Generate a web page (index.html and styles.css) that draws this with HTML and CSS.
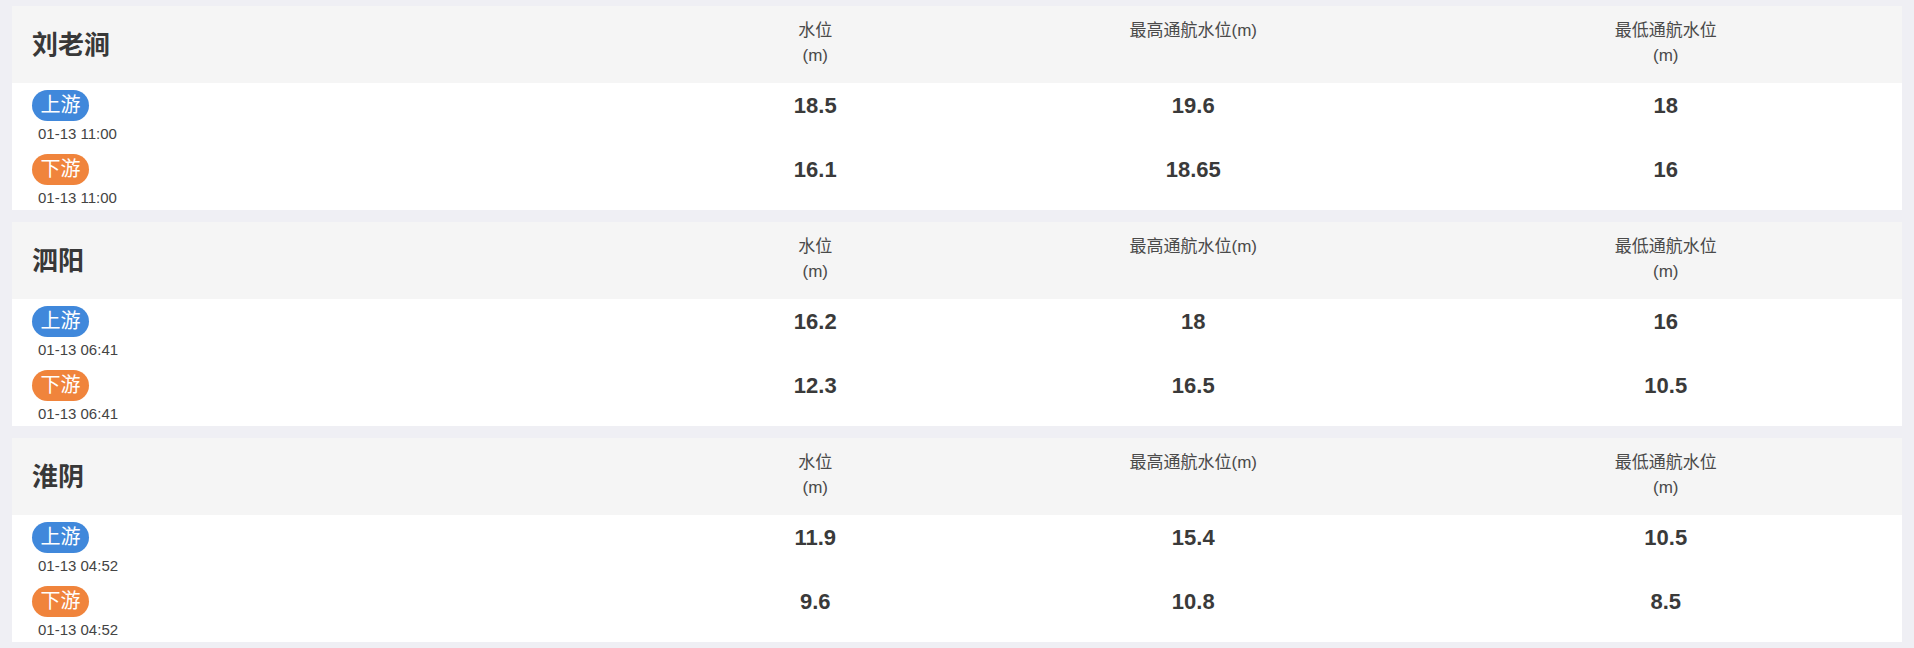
FILE: index.html
```html
<!DOCTYPE html>
<html lang="zh-CN">
<head>
<meta charset="utf-8">
<title>水位</title>
<link rel="stylesheet" href="styles.css">
</head>
<body>
<div class="list">
  <section class="card">
    <div class="grid head">
      <div class="title">刘老涧</div>
      <div class="th">水位<br>(m)</div>
      <div class="th">最高通航水位(m)</div>
      <div class="th">最低通航水位<br>(m)</div>
    </div>
    <div class="body">
      <div class="grid row">
        <div class="site"><span class="badge up">上游</span><div class="time">01-13 11:00</div></div>
        <div class="val">18.5</div>
        <div class="val">19.6</div>
        <div class="val">18</div>
      </div>
      <div class="grid row">
        <div class="site"><span class="badge down">下游</span><div class="time">01-13 11:00</div></div>
        <div class="val">16.1</div>
        <div class="val">18.65</div>
        <div class="val">16</div>
      </div>
    </div>
  </section>
  <section class="card">
    <div class="grid head">
      <div class="title">泗阳</div>
      <div class="th">水位<br>(m)</div>
      <div class="th">最高通航水位(m)</div>
      <div class="th">最低通航水位<br>(m)</div>
    </div>
    <div class="body">
      <div class="grid row">
        <div class="site"><span class="badge up">上游</span><div class="time">01-13 06:41</div></div>
        <div class="val">16.2</div>
        <div class="val">18</div>
        <div class="val">16</div>
      </div>
      <div class="grid row">
        <div class="site"><span class="badge down">下游</span><div class="time">01-13 06:41</div></div>
        <div class="val">12.3</div>
        <div class="val">16.5</div>
        <div class="val">10.5</div>
      </div>
    </div>
  </section>
  <section class="card">
    <div class="grid head">
      <div class="title">淮阴</div>
      <div class="th">水位<br>(m)</div>
      <div class="th">最高通航水位(m)</div>
      <div class="th">最低通航水位<br>(m)</div>
    </div>
    <div class="body">
      <div class="grid row">
        <div class="site"><span class="badge up">上游</span><div class="time">01-13 04:52</div></div>
        <div class="val">11.9</div>
        <div class="val">15.4</div>
        <div class="val">10.5</div>
      </div>
      <div class="grid row">
        <div class="site"><span class="badge down">下游</span><div class="time">01-13 04:52</div></div>
        <div class="val">9.6</div>
        <div class="val">10.8</div>
        <div class="val">8.5</div>
      </div>
    </div>
  </section>
</div>
</body>
</html>
```
FILE: styles.css
```css
html, body {
  margin: 0;
  padding: 0;
  background: #efeff4;
}
body {
  font-family: "Liberation Sans", "Noto Sans CJK SC", sans-serif;
  color: #333;
}
.list {
  padding: 6px 12px 0;
  display: flex;
  flex-direction: column;
  gap: 12px;
}
.card {
  background: #fff;
  height: 204px;
}
.grid {
  display: grid;
  grid-template-columns: 35% 15% 25% 25%;
}
.head {
  background: #f5f5f5;
  height: 77px;
}
.title {
  align-self: center;
  padding-left: 20px;
  font-size: 26px;
  font-weight: bold;
  color: #383838;
  line-height: 32px;
}
.th {
  align-self: start;
  padding-top: 12px;
  text-align: center;
  font-size: 17px;
  line-height: 25px;
  color: #4a4a4a;
}
.body {
  padding: 7px 0 0;
  display: flex;
  flex-direction: column;
  gap: 10px;
}
.site {
  padding-left: 20px;
  display: flex;
  flex-direction: column;
  align-items: flex-start;
}
.badge {
  display: inline-block;
  height: 31px;
  line-height: 31px;
  padding: 0 8.5px;
  border-radius: 16px;
  color: #fff;
  font-size: 20px;
}
.badge.up {
  background: #4088db;
}
.badge.down {
  background: #f0843c;
}
.time {
  margin-top: 3px;
  padding-left: 6px;
  font-size: 15px;
  line-height: 20px;
  color: #444;
}
.val {
  text-align: center;
  font-size: 22px;
  font-weight: bold;
  line-height: 31px;
  color: #3a3a3a;
}
```
